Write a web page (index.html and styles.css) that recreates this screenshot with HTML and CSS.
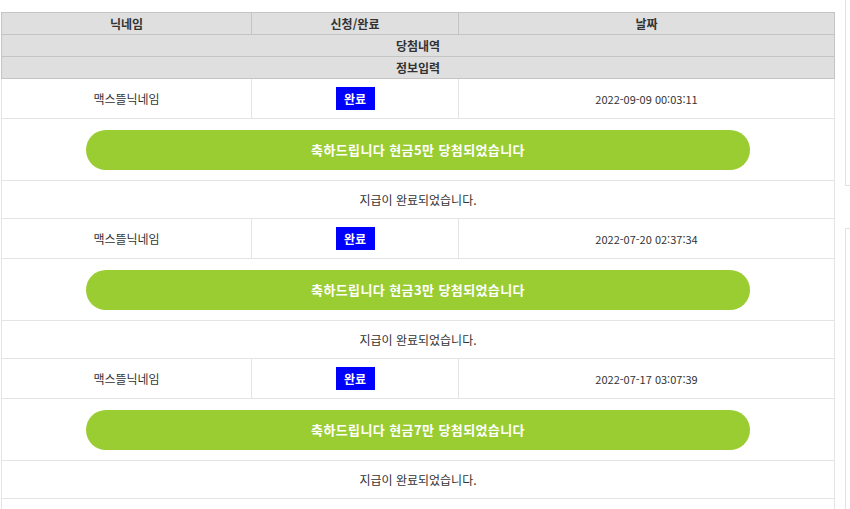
FILE: index.html
```html
<!DOCTYPE html>
<html lang="ko">
<head>
    <meta charset="UTF-8">
    <meta name="viewport" content="width=device-width, initial-scale=1.0">
    <title>당첨내역</title>
    <link rel="stylesheet" href="styles.css">
</head>
<body>

    <div class="page">
        <table class="prize-table">
            <colgroup>
                <col class="col-name">
                <col class="col-status">
                <col class="col-date">
            </colgroup>
            <thead>
                <tr>
                    <th>닉네임</th>
                    <th>신청/완료</th>
                    <th>날짜</th>
                </tr>
                <tr>
                    <th colspan="3">당첨내역</th>
                </tr>
                <tr>
                    <th colspan="3">정보입력</th>
                </tr>
            </thead>
            <tbody>
                <tr class="entry">
                    <td>맥스뜰닉네임</td>
                    <td><span class="badge">완료</span></td>
                    <td class="date">2022-09-09 00:03:11</td>
                </tr>
                <tr class="prize">
                    <td colspan="3"><div class="prize-bar">축하드립니다 현금5만 당첨되었습니다</div></td>
                </tr>
                <tr class="note">
                    <td colspan="3">지급이 완료되었습니다.</td>
                </tr>

                <tr class="entry">
                    <td>맥스뜰닉네임</td>
                    <td><span class="badge">완료</span></td>
                    <td class="date">2022-07-20 02:37:34</td>
                </tr>
                <tr class="prize">
                    <td colspan="3"><div class="prize-bar">축하드립니다 현금3만 당첨되었습니다</div></td>
                </tr>
                <tr class="note">
                    <td colspan="3">지급이 완료되었습니다.</td>
                </tr>

                <tr class="entry">
                    <td>맥스뜰닉네임</td>
                    <td><span class="badge">완료</span></td>
                    <td class="date">2022-07-17 03:07:39</td>
                </tr>
                <tr class="prize">
                    <td colspan="3"><div class="prize-bar">축하드립니다 현금7만 당첨되었습니다</div></td>
                </tr>
                <tr class="note">
                    <td colspan="3">지급이 완료되었습니다.</td>
                </tr>

                <!-- next entry starts below the fold -->
                <tr class="entry">
                    <td colspan="3"></td>
                </tr>
            </tbody>
        </table>

        <div class="side">
            <div class="side-box side-box-top"></div>
            <div class="side-box side-box-bottom"></div>
        </div>
    </div>

</body>
</html>
```

FILE: styles.css
```css
body {
    margin: 0;
    font-family: "Noto Sans CJK KR", "Noto Sans", sans-serif;
    font-size: 12px;
    color: #333;
    background: #fff;
    overflow: hidden;
}

.page {
    display: flex;
    align-items: flex-start;
    height: 509px;
}

.prize-table {
    width: 834px;
    margin: 12px 0 0 1px;
    border-collapse: collapse;
    table-layout: fixed;
    flex-shrink: 0;
}

.col-name {
    width: 250px;
}

.col-status {
    width: 207px;
}

.prize-table th {
    height: 21px;
    padding: 0;
    background-color: #dfdfdf;
    border: 1px solid #c4c4c4;
    font-weight: bold;
    color: #333;
    text-align: center;
    line-height: 14px;
}

.prize-table td {
    padding: 0;
    border: 1px solid #e4e4e4;
    text-align: center;
    line-height: 14px;
}

.entry td {
    height: 39px;
}

.prize td {
    height: 61px;
}

.note td {
    height: 37px;
}

.badge {
    display: inline-block;
    width: 39px;
    height: 23px;
    line-height: 23px;
    background-color: #0000ff;
    color: #fff;
    font-weight: bold;
}

.date {
    font-size: 11px;
}

.prize-bar {
    width: 664px;
    height: 40px;
    margin: 0 0 0 84px;
    border-radius: 20px;
    background-color: #9acd32;
    color: #fff;
    font-size: 13px;
    font-weight: bold;
    letter-spacing: 0.4px;
    line-height: 40px;
}

.side {
    margin-left: 10px;
    flex: 1;
}

.side-box {
    border-left: 1px solid #e2e2e2;
}

.side-box-top {
    height: 185px;
    border-bottom: 1px solid #e2e2e2;
}

.side-box-bottom {
    margin-top: 42px;
    height: 300px;
    border-top: 1px solid #e2e2e2;
}
```
